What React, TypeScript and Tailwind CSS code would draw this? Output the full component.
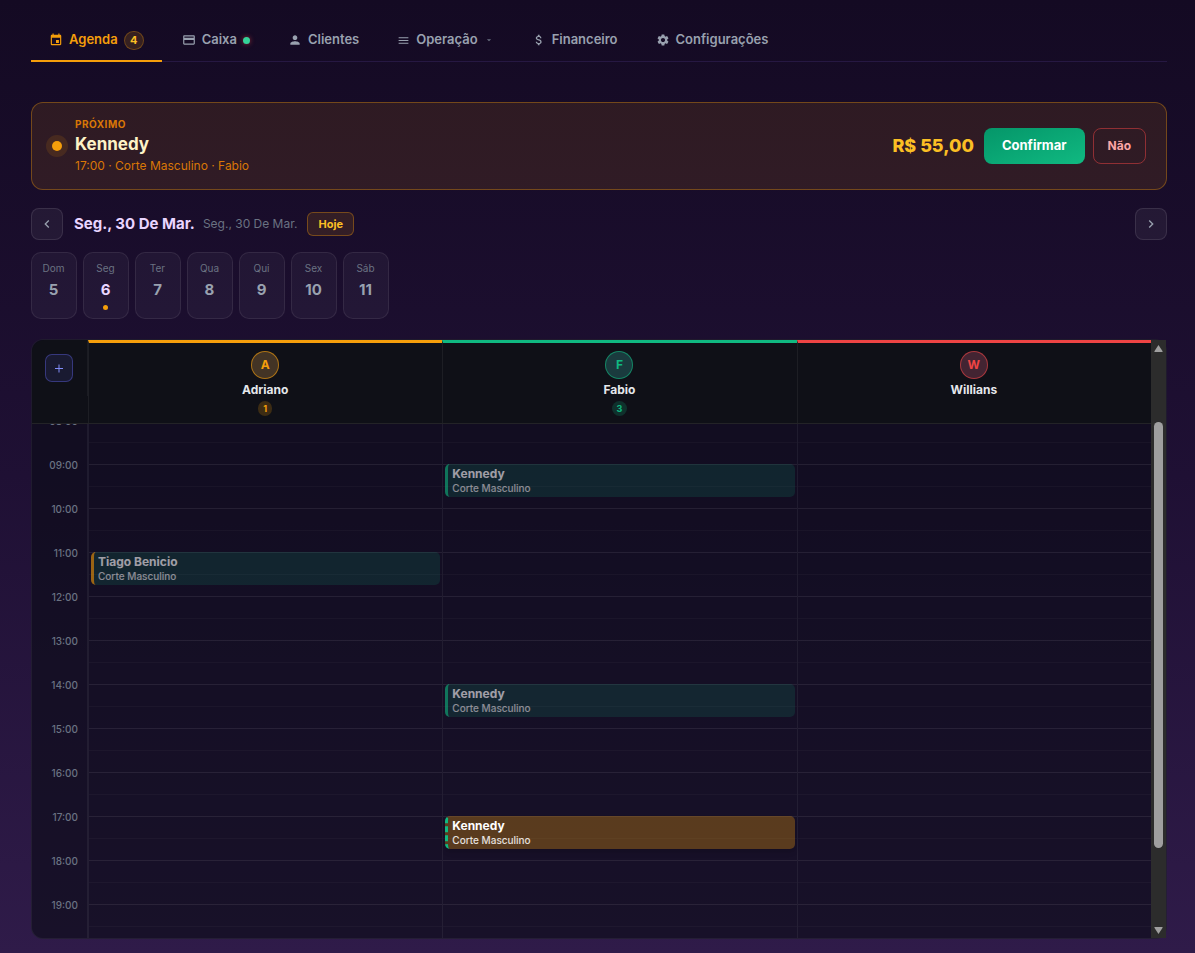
import type { ReactNode } from "react";
import {
  MdArrowDropDown,
  MdAttachMoney,
  MdChevronLeft,
  MdChevronRight,
  MdCreditCard,
  MdEvent,
  MdMenu,
  MdPerson,
  MdSettings,
} from "react-icons/md";

const HOUR_HEIGHT = 44;
const FIRST_HOUR = 8;
const hours = [8, 9, 10, 11, 12, 13, 14, 15, 16, 17, 18, 19];

type Appointment = { client: string; service: string; start: number; pending?: boolean };

type Barber = {
  name: string;
  topBorder: string;
  avatar: string;
  badge: string;
  eventBorder: string;
  appointments: Appointment[];
};

const barbers: Barber[] = [
  {
    name: "Adriano",
    topBorder: "border-t-[#f59e0b]",
    avatar: "border-[#f59e0b]/60 bg-[#433425] text-[#f59e0b]",
    badge: "bg-[#f59e0b]/20 text-[#f59e0b]",
    eventBorder: "border-l-[#f59e0b]",
    appointments: [{ client: "Tiago Benicio", service: "Corte Masculino", start: 11 }],
  },
  {
    name: "Fabio",
    topBorder: "border-t-[#10b981]",
    avatar: "border-[#10b981]/60 bg-[#1a3b3e] text-[#10b981]",
    badge: "bg-[#10b981]/20 text-[#10b981]",
    eventBorder: "border-l-[#10b981]",
    appointments: [
      { client: "Kennedy", service: "Corte Masculino", start: 9 },
      { client: "Kennedy", service: "Corte Masculino", start: 14 },
      { client: "Kennedy", service: "Corte Masculino", start: 17, pending: true },
    ],
  },
  {
    name: "Willians",
    topBorder: "border-t-[#ef4444]",
    avatar: "border-[#ef4444]/60 bg-[#432432] text-[#ef4444]",
    badge: "bg-[#ef4444]/20 text-[#ef4444]",
    eventBorder: "border-l-[#ef4444]",
    appointments: [],
  },
];

const week = [
  { label: "Dom", day: 5 },
  { label: "Seg", day: 6, active: true },
  { label: "Ter", day: 7 },
  { label: "Qua", day: 8 },
  { label: "Qui", day: 9 },
  { label: "Sex", day: 10 },
  { label: "Sáb", day: 11 },
];

function Tab({ active, icon, children }: { active?: boolean; icon: ReactNode; children: ReactNode }) {
  return (
    <a
      href="#"
      className={`-mb-px flex h-11 items-center gap-1.5 border-b-2 px-[18px] pt-0.5 ${
        active ? "border-[#f59e0b] text-[#f59e0b]" : "border-transparent text-gray-400"
      }`}
    >
      {icon}
      {children}
    </a>
  );
}

function Nav() {
  return (
    <nav className="flex gap-0.5 border-b border-[#261842] text-[13px] font-semibold">
      <Tab active icon={<MdEvent size={14} />}>
        <span>Agenda</span>
        <span className="flex h-[19px] w-5 items-center justify-center rounded-full border border-[#f59e0b]/30 bg-[#f59e0b]/15 text-[11px] font-bold text-[#fbbf24]">
          4
        </span>
      </Tab>
      <Tab icon={<MdCreditCard size={14} />}>
        <span>Caixa</span>
        <span className="size-[7px] rounded-full bg-[#34d399] shadow-[0_0_5px_rgba(239,68,68,0.6)]" />
      </Tab>
      <Tab icon={<MdPerson size={14} />}>Clientes</Tab>
      <Tab icon={<MdMenu size={13} />}>
        Operação
        <MdArrowDropDown size={10} className="text-gray-500" />
      </Tab>
      <Tab icon={<MdAttachMoney size={14} />}>Financeiro</Tab>
      <Tab icon={<MdSettings size={14} />}>Configurações</Tab>
    </nav>
  );
}

function NextCard() {
  return (
    <section className="mt-10 flex h-[88px] items-center rounded-xl border border-[#f59e0b]/35 bg-[#f59e0b]/11 px-5">
      <span className="size-2.5 shrink-0 rounded-full bg-[#f59e0b] shadow-[0_0_0_6px_rgba(245,158,11,0.12)]" />
      <div className="ml-[13px] flex-1">
        <p className="text-[10px] leading-4 font-bold tracking-wider text-[#d97706]">PRÓXIMO</p>
        <h2 className="text-[17px] leading-6 font-bold text-[#fef3c7]">Kennedy</h2>
        <p className="text-xs leading-5 text-[#d97706]">17:00 · Corte Masculino · Fabio</p>
      </div>
      <p className="mr-2.5 text-lg font-extrabold text-[#fbbf24]">R$ 55,00</p>
      <button className="mr-2 h-9 rounded-lg bg-linear-to-br from-[#059669] to-[#10b981] px-[18px] text-[13px] font-bold text-white">
        Confirmar
      </button>
      <button className="h-9 rounded-lg border border-[#ef4444]/50 px-3.5 text-xs font-bold text-[#fca5a5]">
        Não
      </button>
    </section>
  );
}

function DateBar() {
  const arrow =
    "flex size-8 items-center justify-center rounded-lg border border-white/10 bg-white/5 text-gray-400";
  return (
    <div className="mt-[18px] flex items-center">
      <button aria-label="Anterior" className={arrow}>
        <MdChevronLeft size={16} />
      </button>
      <h1 className="ml-[11px] text-[15px] font-bold text-[#e9d5ff]">Seg., 30 De Mar.</h1>
      <span className="ml-2 text-xs text-gray-500">Seg., 30 De Mar.</span>
      <button className="ml-2.5 h-6 rounded-md border border-[#f59e0b]/35 bg-[#f59e0b]/12 px-2.5 text-[11px] font-bold text-[#fbbf24]">
        Hoje
      </button>
      <button aria-label="Próximo" className={`ml-auto ${arrow}`}>
        <MdChevronRight size={16} />
      </button>
    </div>
  );
}

function WeekStrip() {
  return (
    <div className="mt-3 flex gap-1.5">
      {week.map((d) => (
        <button
          key={d.label}
          className="flex h-[67px] w-[46px] flex-col items-center rounded-[10px] border border-white/8 bg-white/4 pt-[7px] pr-px"
        >
          <span className="text-[10px] leading-4 text-gray-500">{d.label}</span>
          <span
            className={`mt-0.5 text-[15px] leading-6 font-bold ${d.active ? "text-[#e9d5ff]" : "text-gray-400"}`}
          >
            {d.day}
          </span>
          {d.active && <span className="mt-[3px] size-[5px] rounded-full bg-[#f59e0b]" />}
        </button>
      ))}
    </div>
  );
}

function CalendarHeader() {
  return (
    <div className="relative z-10 flex h-[84px] border-b border-[#232327] bg-[#0f1017]">
      <div className="w-14 shrink-0">
        <div className="flex h-14 items-center border-r border-white/5 pl-[13px]">
          <button
            aria-label="Novo agendamento"
            className="flex size-7 items-center justify-center rounded-[7px] border border-[#6366f1]/40 bg-[#6366f1]/12 text-[#818cf8]"
          >
            <svg width="10" height="10" viewBox="0 0 10 10" stroke="currentColor" strokeWidth="1">
              <path d="M1 5.5H9M5 1.5V9.5" />
            </svg>
          </button>
        </div>
      </div>
      {barbers.map((b) => (
        <div
          key={b.name}
          className={`flex flex-1 flex-col items-center border-t-3 border-l border-l-white/6 pt-2 pr-px ${b.topBorder}`}
        >
          <span
            className={`flex size-7 items-center justify-center rounded-full border text-xs font-bold ${b.avatar}`}
          >
            {b.name[0]}
          </span>
          <span className="mt-0.5 text-xs leading-[18px] font-bold text-gray-200">{b.name}</span>
          {b.appointments.length > 0 && (
            <span className={`mt-0.5 rounded-full px-[5px] text-[9px] leading-[15px] font-bold ${b.badge}`}>
              {b.appointments.length}
            </span>
          )}
        </div>
      ))}
    </div>
  );
}

function EventCard({ item, border }: { item: Appointment; border: string }) {
  return (
    <div
      className={`absolute inset-x-0.5 h-[33px] overflow-hidden rounded-[5px] border-l-3 pt-0.5 pl-1 ${border} ${
        item.pending ? "border-dashed bg-[#f59e0b]/30 shadow-md" : "bg-[#10b981]/23 opacity-60"
      }`}
      style={{ top: (item.start - FIRST_HOUR) * HOUR_HEIGHT }}
    >
      <p className="text-xs leading-[15px] font-bold text-white">{item.client}</p>
      <p className="text-[10px] leading-[14px] font-medium text-white/85">{item.service}</p>
    </div>
  );
}

function CalendarBody() {
  return (
    <div className="-mt-1 flex">
      <div className="-mt-2 w-14 shrink-0 border-r border-white/6">
        {hours.map((h) => (
          <div key={h} className="h-11 pr-[9px] text-right text-[10px] leading-[18px] font-medium text-gray-500">
            {String(h).padStart(2, "0")}:00
          </div>
        ))}
      </div>
      {barbers.map((b) => (
        <div key={b.name} className="relative flex-1 border-l border-white/6">
          {hours.map((h) => (
            <div key={h} className="h-11 border-t border-white/8 pt-[21px]">
              <div className="border-t border-white/3" />
            </div>
          ))}
          {b.appointments.map((a) => (
            <EventCard key={a.start} item={a} border={b.eventBorder} />
          ))}
        </div>
      ))}
    </div>
  );
}

function ScrollTrack() {
  return (
    <div className="flex w-[15px] shrink-0 flex-col items-center justify-between bg-[#2c2c2c] pt-1 pb-[3px]">
      <svg width="9" height="9" viewBox="0 0 9 9" fill="#9f9f9f">
        <path d="M4.5 1 8.6 7.2Q9 8 8 8H1Q0 8 .4 7.2Z" />
      </svg>
      <span className="mt-[69px] mb-[78px] w-[9px] flex-1 rounded-full bg-[#9f9f9f]" />
      <svg width="9" height="9" viewBox="0 0 9 9" fill="#9f9f9f">
        <path d="M4.5 8 .4 1.8Q0 1 1 1H8Q9 1 8.6 1.8Z" />
      </svg>
    </div>
  );
}

function Calendar() {
  return (
    <section className="mt-5 flex h-[600px] rounded-xl border border-white/6 bg-[#0c0d18]/65">
      <div className="min-w-0 flex-1 overflow-hidden rounded-l-xl">
        <CalendarHeader />
        <CalendarBody />
      </div>
      <ScrollTrack />
    </section>
  );
}

export default function App() {
  return (
    <main className="min-h-screen bg-linear-to-b from-[#140a23] via-[#1f1034] to-[#2f1b49] pt-[18px] pr-7 pb-3.5 pl-[31px] font-['Inter',sans-serif]">
      <Nav />
      <NextCard />
      <DateBar />
      <WeekStrip />
      <Calendar />
    </main>
  );
}
